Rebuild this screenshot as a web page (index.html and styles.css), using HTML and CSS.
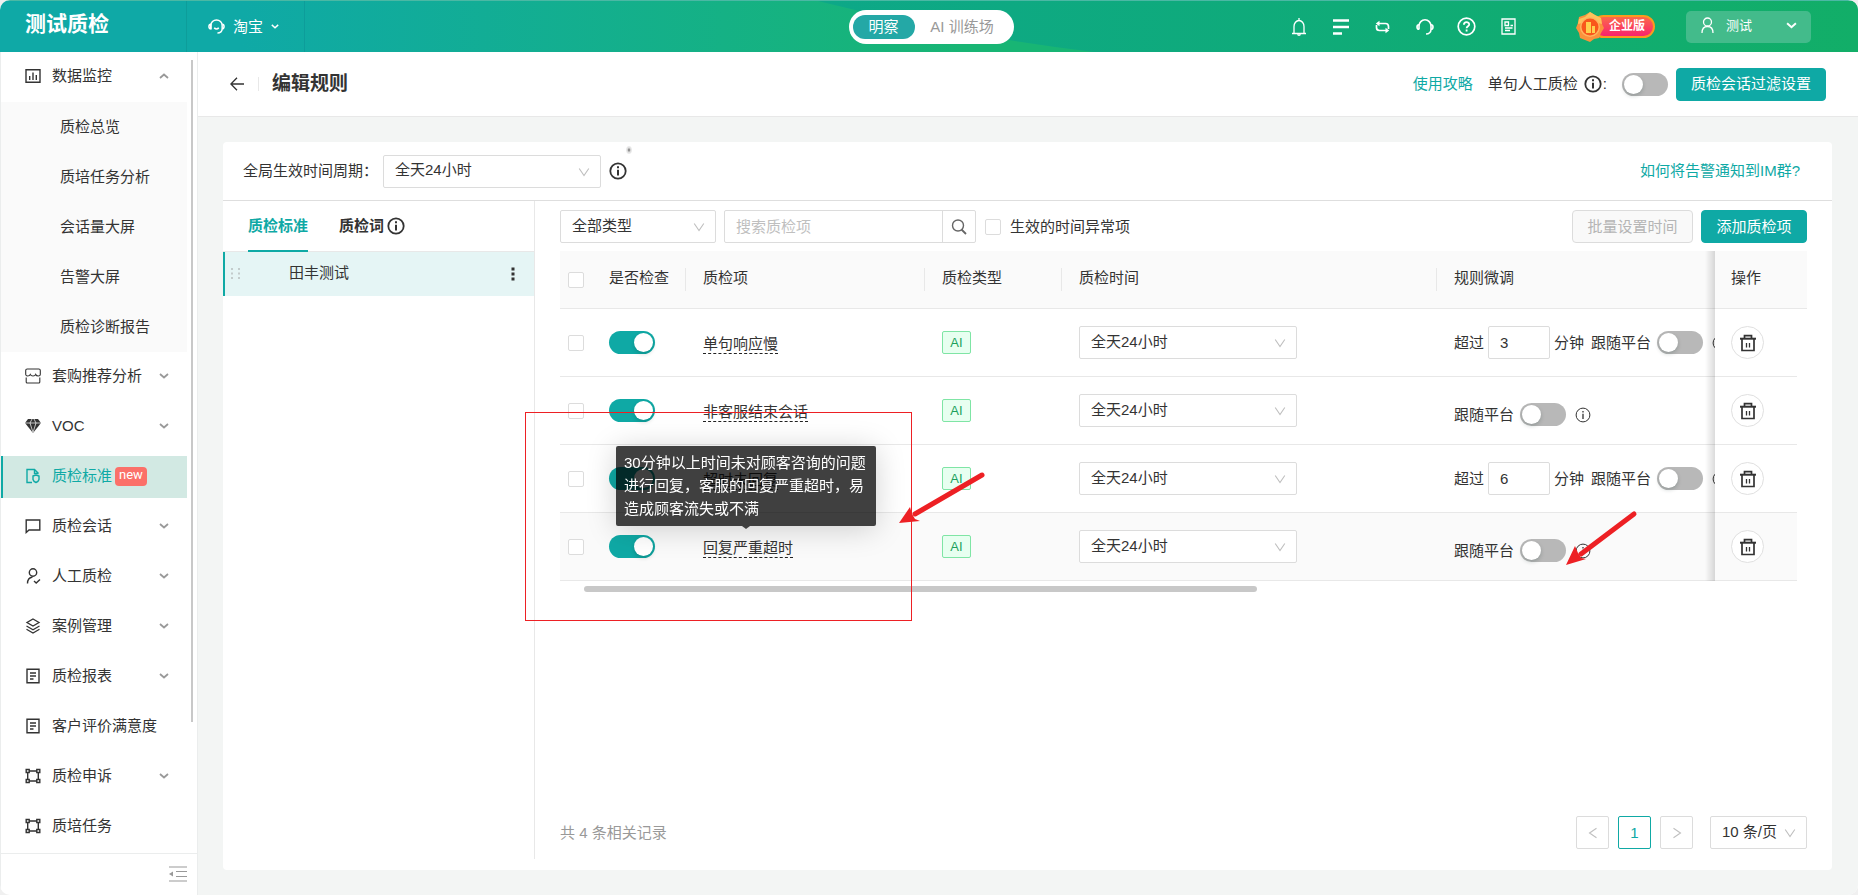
FILE: index.html
```
<!DOCTYPE html>
<html lang="zh-CN">
<head>
<meta charset="utf-8">
<title>测试质检</title>
<link rel="stylesheet" href="styles.css">
</head>
<body>
<svg class="defs" width="0" height="0" aria-hidden="true">
  <symbol id="down" viewBox="0 0 10 8"><path d="M1 2l4 3.5L9 2" fill="none" stroke="currentColor" stroke-width="1.8"/></symbol>
  <symbol id="caret" viewBox="0 0 12 12"><path d="M1.2 2.5L6 9.5l4.800-7" fill="none" stroke="currentColor" stroke-width="1.1"/></symbol>
  <symbol id="info" viewBox="0 0 18 18"><circle cx="9" cy="9" r="7.700" fill="none" stroke="currentColor" stroke-width="1.800"/><path d="M9 4.300v2M9 7.700v5.800" stroke="currentColor" stroke-width="2"/></symbol>
  <symbol id="info-thin" viewBox="0 0 16 16"><circle cx="8" cy="8" r="6.900" fill="none" stroke="currentColor"/><path d="M8 4v1.500M8 6.700v5.300" stroke="currentColor" stroke-width="1.300"/></symbol>
  <symbol id="report" viewBox="0 0 16 16"><g fill="none" stroke="currentColor" stroke-width="1.400"><path d="M2 1.200h12v13.600H2z"/><path d="M5 5h6M5 8h6M5 11h3.500"/></g></symbol>
  <symbol id="nodes" viewBox="0 0 16 16"><g fill="none" stroke="currentColor" stroke-width="1.400"><path d="M1.200 1.500h3v3h-3zM11.800 1.500h3v3h-3zM1.200 11.500h3v3h-3zM11.800 11.500h3v3h-3zM4.200 3h7.600M4.200 13h7.600M2.700 4.500v7M13.300 4.500v7"/></g></symbol>
  <symbol id="trash" viewBox="0 0 18 18"><g fill="none" stroke="currentColor"><path d="M1 4.700h16" stroke-width="2"/><path d="M5.500 4V1.600h7V4M3 5v11.500h12V5" stroke-width="1.700"/><path d="M7.500 9v4.500M10.500 9v4.500" stroke-width="1.300"/></g></symbol>
  <symbol id="headset" viewBox="0 0 18 18"><g fill="none" stroke="currentColor" stroke-width="1.600"><path d="M3 11.500V8a6 6.200 0 0 1 12 0v3.500c0 2.500-2 4.500-5 4.500"/><path d="M3 6.700c-1.500 0-2 .8-2 2.300s.5 2.300 2 2.300M15 6.700c1.500 0 2 .8 2 2.300s-.5 2.300-2 2.300"/></g></symbol>
</svg>

<header class="topbar">
  <svg class="topbar-wave" viewBox="0 0 1038 52" preserveAspectRatio="none" aria-hidden="true">
    <defs><linearGradient id="wave" x1="0" x2="1"><stop offset="0" stop-color="#0da888"/><stop offset="1" stop-color="#12ae68"/></linearGradient></defs>
    <path d="M0 0Q130 34 275 52H1038V0z" fill="url(#wave)"/>
  </svg>
  <div class="top-left">
    <div class="brand">测试质检</div>
    <button class="platform">
      <svg width="17" height="17" viewBox="0 0 18 18" aria-hidden="true"><g fill="none" stroke="currentColor" stroke-width="1.600"><path d="M3 12V8a6 6 0 0 1 12 0v3.500c0 2.500-2 4.500-5 4.500"/><path d="M3 6.500c-1.500 0-2 1-2 2.500s.5 2.500 2 2.500zM15 6.500c1.500 0 2 1 2 2.500s-.5 2.500-2 2.500M6.500 10.500c1.500 1.300 3.500 1.300 5 0"/></g></svg>
      <span>淘宝</span>
      <svg width="8" height="7"><use href="#down"/></svg>
    </button>
  </div>
  <nav class="modes"><button class="mode mode-on">明察</button><button class="mode">AI 训练场</button></nav>
  <div class="top-right">
    <div class="tools">
      <button class="tool" aria-label="通知"><svg width="16" height="18" viewBox="0 0 16 18"><path d="M1 15.500h14M3 15.500V8.500a5 6 0 0 1 10 0v7M8 0v3M6.500 16.500c.5 1 2.500 1 3 0" fill="none" stroke="currentColor" stroke-width="1.300"/></svg></button>
      <button class="tool" aria-label="列表"><svg width="16" height="16" viewBox="0 0 16 16"><path d="M0 1.500h16M0 8h16M0 14.500h9" stroke="currentColor" stroke-width="2.600"/></svg></button>
      <button class="tool" aria-label="切换"><svg width="15" height="14" viewBox="0 0 15 14"><path d="M3 3.500H10.500q3 0 3 3V9M1.500 5v2.500q0 3 3 3H12" fill="none" stroke="currentColor" stroke-width="1.700"/><path d="M4.500 .8v5.400L.8 3.500zM10.500 7.800v5.400l3.700-2.700z" fill="currentColor"/></svg></button>
      <button class="tool" aria-label="客服"><svg width="18" height="18"><use href="#headset"/></svg></button>
      <button class="tool" aria-label="帮助"><svg width="19" height="19" viewBox="0 0 19 19"><circle cx="9.500" cy="9.500" r="8.300" fill="none" stroke="currentColor" stroke-width="1.700"/><path d="M6.900 7.700c0-3.500 5.300-3.300 5.300-.3 0 1.800-2.600 1.900-2.600 3.900M9.600 12.600v2" fill="none" stroke="currentColor" stroke-width="1.800"/></svg></button>
      <button class="tool" aria-label="文档"><svg width="15" height="17" viewBox="0 0 15 17"><path d="M1 1h13v15H1zM4 4h3.500v3.500H4zM9.500 7.500H12M4 10h7.500M4 12.500h5" fill="none" stroke="currentColor" stroke-width="1.300"/></svg></button>
    </div>
    <div class="edition">
      <svg class="medal" width="28" height="30" viewBox="0 0 28 30" aria-hidden="true"><path d="M14 0l5 3 6 3 1 6 2 4-3 5-2 5-5 1-4 3-5-2-5-2-1-5-3-5 2-5 1-6 6-2z" fill="#fb923c"/><path d="M14 0l5 3 6 3 1 6-12-3-12 3 1-5 6-2z" fill="#fcc35c"/><circle cx="14" cy="15" r="10" fill="#ffb45e"/><circle cx="14" cy="15" r="8.500" fill="#f9571b"/><path d="M10 10h5v11h-5zM16 14h3v7h-3z" fill="#ffcf4d"/></svg>
      <span class="edition-name">企业版</span>
    </div>
    <button class="user">
      <svg width="13" height="17" viewBox="0 0 13 17"><g fill="none" stroke="currentColor" stroke-width="1.300"><circle cx="6.500" cy="5" r="4"/><path d="M1 16c0-4 2-6.500 5.500-6.500S12 12 12 16"/></g></svg>
      <span>测试</span>
      <svg class="user-caret" width="11" height="9"><use href="#down"/></svg>
    </button>
  </div>
</header>

<div class="shell">
<aside class="side">
  <nav class="menu">
    <a class="item" href="#"><svg width="16" height="16" viewBox="0 0 16 16"><path d="M1 1.700h14v12.600H1zM4.700 8v4M8 4.500V12M11.300 7v5" fill="none" stroke="currentColor" stroke-width="1.400"/></svg>数据监控<svg class="arrow arrow-up" width="10" height="8"><use href="#down"/></svg></a>
    <div class="submenu">
      <a class="subitem" href="#">质检总览</a>
      <a class="subitem" href="#">质培任务分析</a>
      <a class="subitem" href="#">会话量大屏</a>
      <a class="subitem" href="#">告警大屏</a>
      <a class="subitem" href="#">质检诊断报告</a>
    </div>
    <a class="item" href="#"><svg width="16" height="16" viewBox="0 0 16 16"><path d="M1.200 9.500V14a1 1 0 0 0 1 1h11.600a1 1 0 0 0 1-1V9.500M.7 6.500V2.500Q.7 1 2.200 1h11.600q1.500 0 1.500 1.500v4q0 1.500-2 1.500T10.700 6.500Q10 8 8 8T5.300 6.500Q4.500 8 2.700 8T.7 6.500z" fill="none" stroke="currentColor" stroke-width="1.100"/></svg>套购推荐分析<svg class="arrow" width="10" height="8"><use href="#down"/></svg></a>
    <a class="item" href="#"><svg width="16" height="16" viewBox="0 0 16 16"><path d="M3 1h10l3 4-8 10L0 5z" fill="currentColor"/><path d="M0 5h16M5 5l3 9.500L11 5M5 5l2-4M11 5L9 1" stroke="#fff" stroke-width=".7" fill="none"/></svg>VOC<svg class="arrow" width="10" height="8"><use href="#down"/></svg></a>
    <a class="item item-on" href="#"><svg width="16" height="16" viewBox="0 0 16 16"><path d="M7 14.500H2v-13h7.500l4 4M9.500 1.500v4h4" fill="none" stroke="currentColor" stroke-width="1.400"/><path d="M8 8l3-1 3 1v3.500q-.5 2-3 3-2.500-1-3-3z" fill="none" stroke="currentColor" stroke-width="1.400"/></svg>质检标准<span class="new">new</span></a>
    <a class="item" href="#"><svg width="16" height="16" viewBox="0 0 16 16"><path d="M1.200 14.500V2h13.600v10H4z" fill="none" stroke="currentColor" stroke-width="1.400"/></svg>质检会话<svg class="arrow" width="10" height="8"><use href="#down"/></svg></a>
    <a class="item" href="#"><svg width="16" height="16" viewBox="0 0 16 16"><g fill="none" stroke="currentColor" stroke-width="1.400"><circle cx="8" cy="4.500" r="3.700"/><path d="M2.500 15.500c0-4 2-6 5-6.500M9 13l2.200 2 3.800-3.500"/></g></svg>人工质检<svg class="arrow" width="10" height="8"><use href="#down"/></svg></a>
    <a class="item" href="#"><svg width="16" height="16" viewBox="0 0 16 16"><path d="M8 1l6 3.500L8 8 2 4.500zM1.500 8L8 11.700 14.500 8M1.500 11.300L8 15l6.500-3.700" fill="none" stroke="currentColor" stroke-width="1.300"/></svg>案例管理<svg class="arrow" width="10" height="8"><use href="#down"/></svg></a>
    <a class="item" href="#"><svg width="16" height="16"><use href="#report"/></svg>质检报表<svg class="arrow" width="10" height="8"><use href="#down"/></svg></a>
    <a class="item" href="#"><svg width="16" height="16"><use href="#report"/></svg>客户评价满意度</a>
    <a class="item" href="#"><svg width="16" height="16"><use href="#nodes"/></svg>质检申诉<svg class="arrow" width="10" height="8"><use href="#down"/></svg></a>
    <a class="item" href="#"><svg width="16" height="16"><use href="#nodes"/></svg>质培任务</a>
    <span class="side-thumb"></span>
  </nav>
  <div class="side-foot"><button class="fold" aria-label="收起菜单"><svg width="18" height="16" viewBox="0 0 18 16"><path d="M0 1h18M7 5.500h11M7 10.500h11M0 15h18" stroke="currentColor" stroke-width="1.200"/><path d="M0 8l4-2.500v5z" fill="currentColor"/></svg></button></div>
</aside>

<main class="main">
  <div class="pagehead">
    <button class="back" aria-label="返回"><svg width="14" height="14" viewBox="0 0 14 14"><path d="M7 .7L.9 7 7 13.300M1 7h13" fill="none" stroke="currentColor" stroke-width="1.300"/></svg></button>
    <h1 class="title">编辑规则</h1>
    <a class="link" href="#">使用攻略</a>
    <label class="manual" for="manual">单句人工质检 <svg width="18" height="18"><use href="#info"/></svg>:</label>
    <input class="switch" type="checkbox" id="manual">
    <button class="btn btn-primary btn-wide">质检会话过滤设置</button>
  </div>

  <section class="card">
    <div class="period">
      <label for="period">全局生效时间周期：</label>
      <span class="pick pick-period"><select id="period"><option>全天24小时</option></select><svg width="12" height="12"><use href="#caret"/></svg></span>
      <svg width="18" height="18"><use href="#info"/></svg>
      <span class="speck"></span>
      <a class="link period-link" href="#">如何将告警通知到IM群?</a>
    </div>

    <div class="split">
      <div class="groups">
        <div class="tabs"><button class="tab tab-on">质检标准</button><button class="tab">质检词<svg width="18" height="18"><use href="#info"/></svg></button></div>
        <div class="group">
          <svg width="10" height="12" viewBox="0 0 10 12"><path d="M0 1h2M7 1h2M0 5.500h2M7 5.500h2M0 10h2M7 10h2" stroke="#c3cccc" stroke-width="2"/></svg>
          <span class="group-name">田丰测试</span>
          <button aria-label="更多"><svg width="4" height="14" viewBox="0 0 4 14"><path d="M.5 2h3M.5 7h3M.5 12h3" stroke="currentColor" stroke-width="3"/></svg></button>
        </div>
      </div>

      <div class="rules">
        <div class="filters">
          <span class="pick pick-type"><select aria-label="类型"><option>全部类型</option></select><svg width="12" height="12"><use href="#caret"/></svg></span>
          <div class="search"><input class="search-text" type="text" placeholder="搜索质检项" aria-label="搜索质检项"><button class="search-go" aria-label="搜索"><svg width="16" height="16" viewBox="0 0 16 16"><circle cx="7" cy="6.500" r="5.500" fill="none" stroke="currentColor" stroke-width="1.400"/><path d="M10.500 10.500L15 15" stroke="currentColor" stroke-width="1.800"/></svg></button></div>
          <label class="abnormal"><input class="check" type="checkbox">生效的时间异常项</label>
          <button class="btn btn-off" disabled>批量设置时间</button>
          <button class="btn btn-primary btn-add">添加质检项</button>
        </div>

        <div class="scroll">
          <table class="table">
            <colgroup><col class="c-check"><col class="c-on"><col class="c-name"><col class="c-type"><col class="c-time"><col><col class="c-act"><col class="c-gap"></colgroup>
            <thead><tr>
              <th class="tick"><input class="check" type="checkbox" aria-label="全选"></th>
              <th class="sep">是否检查</th><th class="sep">质检项</th><th class="sep">质检类型</th><th class="sep">质检时间</th><th>规则微调</th><th class="fix">操作</th><th class="gap"></th>
            </tr></thead>
            <tbody>
              <tr>
                <td class="tick"><input class="check" type="checkbox" aria-label="选择"></td>
                <td><input class="switch" type="checkbox" checked aria-label="是否检查"></td>
                <td><span class="name">单句响应慢</span></td>
                <td><span class="tag">AI</span></td>
                <td><span class="pick pick-time"><select aria-label="质检时间"><option>全天24小时</option></select><svg width="12" height="12"><use href="#caret"/></svg></span></td>
                <td><div class="tune">超过<input class="num" type="text" value="3" aria-label="分钟数">分钟<label class="follow">跟随平台<input class="switch" type="checkbox"></label><svg width="16" height="16"><use href="#info-thin"/></svg></div></td>
                <td class="fix"><button class="del" aria-label="删除"><svg width="18" height="18"><use href="#trash"/></svg></button></td><td class="gap"></td>
              </tr>
              <tr>
                <td class="tick"><input class="check" type="checkbox" aria-label="选择"></td>
                <td><input class="switch" type="checkbox" checked aria-label="是否检查"></td>
                <td><span class="name">非客服结束会话</span></td>
                <td><span class="tag">AI</span></td>
                <td><span class="pick pick-time"><select aria-label="质检时间"><option>全天24小时</option></select><svg width="12" height="12"><use href="#caret"/></svg></span></td>
                <td><div class="tune tune-solo"><label class="follow">跟随平台<input class="switch" type="checkbox"></label><svg width="16" height="16"><use href="#info-thin"/></svg></div></td>
                <td class="fix"><button class="del" aria-label="删除"><svg width="18" height="18"><use href="#trash"/></svg></button></td><td class="gap"></td>
              </tr>
              <tr>
                <td class="tick"><input class="check" type="checkbox" aria-label="选择"></td>
                <td><input class="switch" type="checkbox" checked aria-label="是否检查"></td>
                <td><span class="name">超时未回复</span></td>
                <td><span class="tag">AI</span></td>
                <td><span class="pick pick-time"><select aria-label="质检时间"><option>全天24小时</option></select><svg width="12" height="12"><use href="#caret"/></svg></span></td>
                <td><div class="tune">超过<input class="num" type="text" value="6" aria-label="分钟数">分钟<label class="follow">跟随平台<input class="switch" type="checkbox"></label><svg width="16" height="16"><use href="#info-thin"/></svg></div></td>
                <td class="fix"><button class="del" aria-label="删除"><svg width="18" height="18"><use href="#trash"/></svg></button></td><td class="gap"></td>
              </tr>
              <tr class="hover">
                <td class="tick"><input class="check" type="checkbox" aria-label="选择"></td>
                <td><input class="switch" type="checkbox" checked aria-label="是否检查"></td>
                <td><span class="name">回复严重超时<span class="tip" role="tooltip">30分钟以上时间未对顾客咨询的问题进行回复，客服的回复严重超时，易造成顾客流失或不满</span></span></td>
                <td><span class="tag">AI</span></td>
                <td><span class="pick pick-time"><select aria-label="质检时间"><option>全天24小时</option></select><svg width="12" height="12"><use href="#caret"/></svg></span></td>
                <td><div class="tune tune-solo"><label class="follow">跟随平台<input class="switch" type="checkbox"></label><svg width="16" height="16"><use href="#info-thin"/></svg></div></td>
                <td class="fix"><button class="del" aria-label="删除"><svg width="18" height="18"><use href="#trash"/></svg></button></td><td class="gap"></td>
              </tr>
            </tbody>
          </table>
        </div>
        <div class="hbar"><span class="hbar-thumb"></span></div>

        <div class="pager">
          <span class="total">共 4 条相关记录</span>
          <button class="page" aria-label="上一页"><svg class="turn-left" width="12" height="12"><use href="#caret"/></svg></button>
          <button class="page page-on">1</button>
          <button class="page" aria-label="下一页"><svg class="turn-right" width="12" height="12"><use href="#caret"/></svg></button>
          <span class="pick pick-size"><select aria-label="每页条数"><option>10 条/页</option></select><svg width="12" height="12"><use href="#caret"/></svg></span>
        </div>
      </div>
    </div>
  </section>
</main>
</div>

<svg class="marks" width="1120" height="220" viewBox="0 0 1120 220" aria-hidden="true">
  <rect x="0.500" y="2.500" width="386" height="208" fill="none" stroke="#ed2024"/>
  <g stroke="#ed2024" stroke-width="5" stroke-linecap="round" fill="#ed2024">
    <path d="M457 65L390 104"/><path d="M1109 104L1056 144"/>
  </g>
  <path d="M374 113L385 97 387 104 390 109 395 111z" fill="#ed2024"/>
  <path d="M1041 155L1050 136 1053 143 1056 148 1061 149z" fill="#ed2024"/>
</svg>
</body>
</html>
```
FILE: styles.css
```
* { box-sizing: border-box; }

:root {
  --teal: #0fa9a5;
  --ink: #333;
  --line: #e8e8e8;
  --edge: #dcdcdc;
}

body {
  margin: 0;
  height: 100vh;
  display: flex;
  flex-direction: column;
  overflow: hidden;
  position: relative;
  border-radius: 10px;
  background: #fff;
  color: var(--ink);
  font: 400 15px/22px "Liberation Sans", "Noto Sans CJK SC", sans-serif;
}

html { background: #f0f0f0; }
button, input, select { font: inherit; color: inherit; }
button { border: 0; padding: 0; background: none; cursor: pointer; }
a { color: inherit; text-decoration: none; }
svg { flex: none; display: block; }
.defs { position: absolute; }

/* top bar */
.topbar {
  flex: none;
  height: 52px;
  position: relative;
  display: grid;
  grid-template-columns: 1fr auto 1fr;
  align-items: center;
  color: #fff;
  background: linear-gradient(90deg, #0fa9a6 13%, #18b574 52%);
  border-top: 1px solid #4bb8a4;
}
.topbar-wave { position: absolute; right: 0; top: 0; width: 56%; height: 100%; }
.top-left { align-self: stretch; display: flex; align-items: center; }
.top-right { position: relative; display: flex; align-items: center; justify-content: flex-end; }
.brand { flex: none; width: 186px; padding: 0 0 6px 25px; font-size: 21px; font-weight: 700; line-height: 28px; }
.platform {
  align-self: stretch;
  flex: none;
  width: 119px;
  display: flex;
  align-items: center;
  gap: 8px;
  padding-left: 21px;
  border: solid #0d9d9a;
  border-width: 0 1px;
}
.modes {
  position: relative;
  display: flex;
  height: 34px;
  margin-left: 4px;
  padding: 5px 4px;
  border-radius: 17px;
  background: #fff;
}
.mode { width: 95px; border-radius: 12px; line-height: 22px; color: #999; }
.mode-on { width: 62px; background: #24a8a6; color: #fff; }
.tools { display: flex; }
.tool { width: 42px; height: 30px; display: grid; place-items: center; }
.edition { position: relative; flex: none; display: flex; align-items: center; margin-left: 50px; }
.medal { position: absolute; right: 51px; top: -3px; }
.edition-name {
  margin-left: 12px;
  padding: 0 8px 0 15px;
  border: 2px solid #fb9a1e;
  border-radius: 12px;
  background: linear-gradient(#fb6a4a, #f9226e);
  font-size: 12px;
  font-weight: 700;
  line-height: 19px;
}
.user {
  flex: none;
  display: flex;
  align-items: center;
  gap: 12px;
  width: 125px;
  height: 32px;
  margin: 0 47px 0 31px;
  padding: 0 14px 2px 15px;
  border-radius: 5px;
  background: #43bb8b;
  font-size: 13px;
}
.user-caret { margin-left: auto; }

.shell { flex: 1; display: flex; min-height: 0; }

/* side menu */
.side { flex: none; width: 198px; display: flex; flex-direction: column; border: solid #ebeded; border-width: 0 1px; }
.menu { position: relative; flex: 1; min-height: 0; overflow: hidden; padding: 4px 10px 0 0; }
.item {
  display: flex;
  align-items: center;
  height: 42px;
  margin: 0 0 8px;
  padding: 0 18px 2px 24px;
}
.item > svg:first-child { margin-right: 11px; }
.arrow { margin-left: auto; color: #999; }
.arrow-up { transform: rotate(180deg); }
.submenu { margin: -4px 0 4px; background: #fafafa; }
.subitem { display: block; padding: 14px 0 14px 59px; }
.item-on { margin-left: -1px; padding-left: 22px; border-left: 3px solid var(--teal); background: #d2e9e3; color: var(--teal); }
.new { margin-left: 3px; padding: 0 4px 3px; border-radius: 4px; background: #fb7069; color: #fff; font: 400 13px/16px Roboto, sans-serif; }
.side-thumb { position: absolute; right: 4px; top: 8px; bottom: 131px; width: 2px; background: #c8c8c8; }
.side-foot { flex: none; display: flex; justify-content: flex-end; height: 42px; padding: 0 10px 2px 0; border-top: 1px solid #ebeded; color: #999; }

/* page heading */
.main { flex: 1; min-width: 0; display: flex; flex-direction: column; background: #f3f5f4; }
.pagehead {
  flex: none;
  display: flex;
  align-items: center;
  height: 65px;
  padding: 0 32px;
  background: #fff;
  border-bottom: 1px solid var(--line);
}
.back { padding-right: 14px; border-right: 1px solid var(--line); }
.title { margin: 0 auto 0 13px; font-size: 19px; font-weight: 700; line-height: 28px; }
.link { color: var(--teal); }
.manual { display: flex; align-items: center; gap: 6px; margin: 0 15px; }
.manual svg { margin-right: -5px; }
.btn { height: 33px; border: 1px solid var(--teal); border-radius: 4px; line-height: 22px; }
.btn-primary { background: var(--teal); color: #fff; }
.btn-wide { width: 150px; margin-left: 8px; }

.switch {
  appearance: none;
  flex: none;
  display: block;
  width: 46px;
  height: 23px;
  margin: 0;
  padding: 2px;
  border-radius: 12px;
  background: #b8b8b8;
}
.switch::before { content: ""; display: block; width: 19px; height: 19px; border-radius: 50%; background: #fff; box-shadow: 0 2px 4px #00231f33; }
.switch:checked { background: var(--teal); }
.switch:checked::before { margin-left: auto; }

.check { appearance: none; flex: none; display: block; width: 16px; height: 16px; margin: 0; border: 1px solid var(--edge); border-radius: 2px; background: #fff; }

.pick { position: relative; display: block; height: 33px; }
.pick select { appearance: none; width: 100%; height: 100%; padding: 0 11px 2px; border: 1px solid var(--edge); border-radius: 2px; background: #fff; }
.pick svg { position: absolute; right: 11px; top: 11px; color: #bfbfbf; pointer-events: none; }

/* content card */
.card { flex: 1; display: flex; flex-direction: column; min-height: 0; margin: 25px 26px 25px 25px; background: #fff; border-radius: 4px; }
.period { position: relative; flex: none; display: flex; align-items: center; height: 59px; padding: 0 32px 0 20px; border-bottom: 1px solid #dedede; }
.period label { width: 140px; white-space: nowrap; }
.pick-period { width: 218px; margin-right: 8px; }
.period-link { margin-left: auto; }
.speck { position: absolute; left: 403px; top: 4px; width: 6px; height: 8px; border-radius: 50%; background: radial-gradient(#666, #ddd 40%, #fff); }

.split { flex: 1; display: flex; min-height: 0; }
.groups { flex: none; width: 312px; margin-bottom: 11px; border-right: 1px solid var(--line); }
.tabs { display: flex; gap: 31px; height: 51px; padding-left: 25px; border-bottom: 1px solid var(--line); }
.tab { display: flex; align-items: center; gap: 3px; margin-bottom: -1px; border-bottom: 2px solid transparent; font-weight: 700; }
.tab-on { border-color: var(--teal); color: var(--teal); }
.group { display: flex; align-items: center; height: 44px; padding: 0 19px 0 6px; border-left: 2px solid var(--teal); background: #e5f5f5; }
.group-name { margin: 0 auto 2px 48px; }

.rules { flex: 1; min-width: 0; display: flex; flex-direction: column; padding: 9px 25px 21px; }
.filters { display: flex; align-items: center; margin-bottom: 8px; }
.pick-type { width: 156px; margin-right: 8px; }
.search { display: flex; width: 252px; height: 33px; border: 1px solid var(--edge); border-radius: 2px; }
.search-text { flex: 1; min-width: 0; border: 0; padding: 0 11px; outline: 0; background: none; }
.search-text::placeholder { color: #bfbfbf; }
.search-go { width: 33px; display: grid; place-items: center; border-left: 1px solid var(--edge); color: #666; }
.abnormal { display: flex; align-items: center; gap: 9px; margin: 0 auto 0 9px; }
.btn-off { width: 121px; margin-right: 8px; border-color: var(--edge); background: #f9f9f9; color: #b5b5b5; }
.btn-add { width: 106px; }

/* rule table */
.scroll { overflow: hidden; }
.table { width: 100%; min-width: 1371px; table-layout: fixed; border-collapse: separate; border-spacing: 0; }
.c-check { width: 32px; }
.c-on { width: 94px; }
.c-name { width: 239px; }
.c-type { width: 137px; }
.c-time { width: 375px; }
.c-act { width: 82px; }
.c-gap { width: 10px; }
.table th { position: relative; height: 58px; padding: 0 17px 3px; text-align: left; font-weight: inherit; white-space: nowrap; background: #fafafa; border-bottom: 1px solid var(--line); }
.table td { height: 68px; padding: 0 17px; background: #fff; border-bottom: 1px solid var(--line); }
.table .tick { padding: 0 0 0 8px; }
.sep::after { content: ""; position: absolute; right: 0; top: 17px; width: 1px; height: 23px; background: var(--line); }
.table .hover td { background: #fafafa; }
.table .fix { position: sticky; right: 10px; z-index: 1; padding-left: 16px; }
.fix::before { content: ""; position: absolute; right: 100%; top: 0; bottom: -1px; width: 10px; background: linear-gradient(90deg, #0000, #00000024); }
.table .gap { position: sticky; right: 0; z-index: 2; padding: 0; }
.table td.gap, .table .hover td.gap { border-color: #fff; background: #fff; }
.name { position: relative; display: inline-block; line-height: 19px; border-bottom: 1px dashed #222; vertical-align: middle; }
.tag { display: block; width: 29px; border: 1px solid #7fe5a5; border-radius: 2px; background: #e7fff0; color: #1d9f5c; font-size: 13px; line-height: 21px; text-align: center; }
.pick-time { width: 218px; }
.tune { display: flex; align-items: center; gap: 4px; white-space: nowrap; }
.tune-solo { padding-top: 8px; }
.num { width: 62px; height: 33px; padding: 0 11px; border: 1px solid var(--edge); border-radius: 2px; background: #fff; }
.follow { display: flex; align-items: center; gap: 6px; margin: 0 5px 0 3px; }
.tune-solo .follow { margin-left: 0; }
.del { width: 33px; height: 33px; display: grid; place-items: center; border: 1px solid #e0e0e0; border-radius: 50%; background: #fff; }

.tip {
  position: absolute;
  left: 50%;
  bottom: 31px;
  z-index: 3;
  width: 260px;
  margin-left: -132px;
  padding: 5px 8px 6px;
  border-radius: 2px;
  background: #000000bf;
  box-shadow: 0 3px 30px #0000002e;
  color: #fff;
  line-height: 23px;
}
.tip::after { content: ""; position: absolute; left: 126px; top: 100%; border: solid transparent; border-width: 3px 4px 0; border-top-color: #404040; }

.hbar { padding: 5px 0 0 24px; }
.hbar-thumb { display: block; width: 55%; height: 6px; border-radius: 3px; background: #c8c8c8; }

.pager { display: flex; align-items: center; margin-top: auto; }
.total { margin-right: auto; color: #999; }
.page { width: 33px; height: 33px; display: grid; place-items: center; margin-right: 9px; border: 1px solid var(--edge); border-radius: 2px; color: #bfbfbf; }
.page-on { border-color: var(--teal); color: var(--teal); }
.turn-left { transform: rotate(90deg); }
.turn-right { transform: rotate(-90deg); }
.pick-size { width: 97px; margin-left: 8px; }

/* pen marks over the page */
.marks { position: absolute; left: 525px; top: 410px; pointer-events: none; z-index: 10; }
```
